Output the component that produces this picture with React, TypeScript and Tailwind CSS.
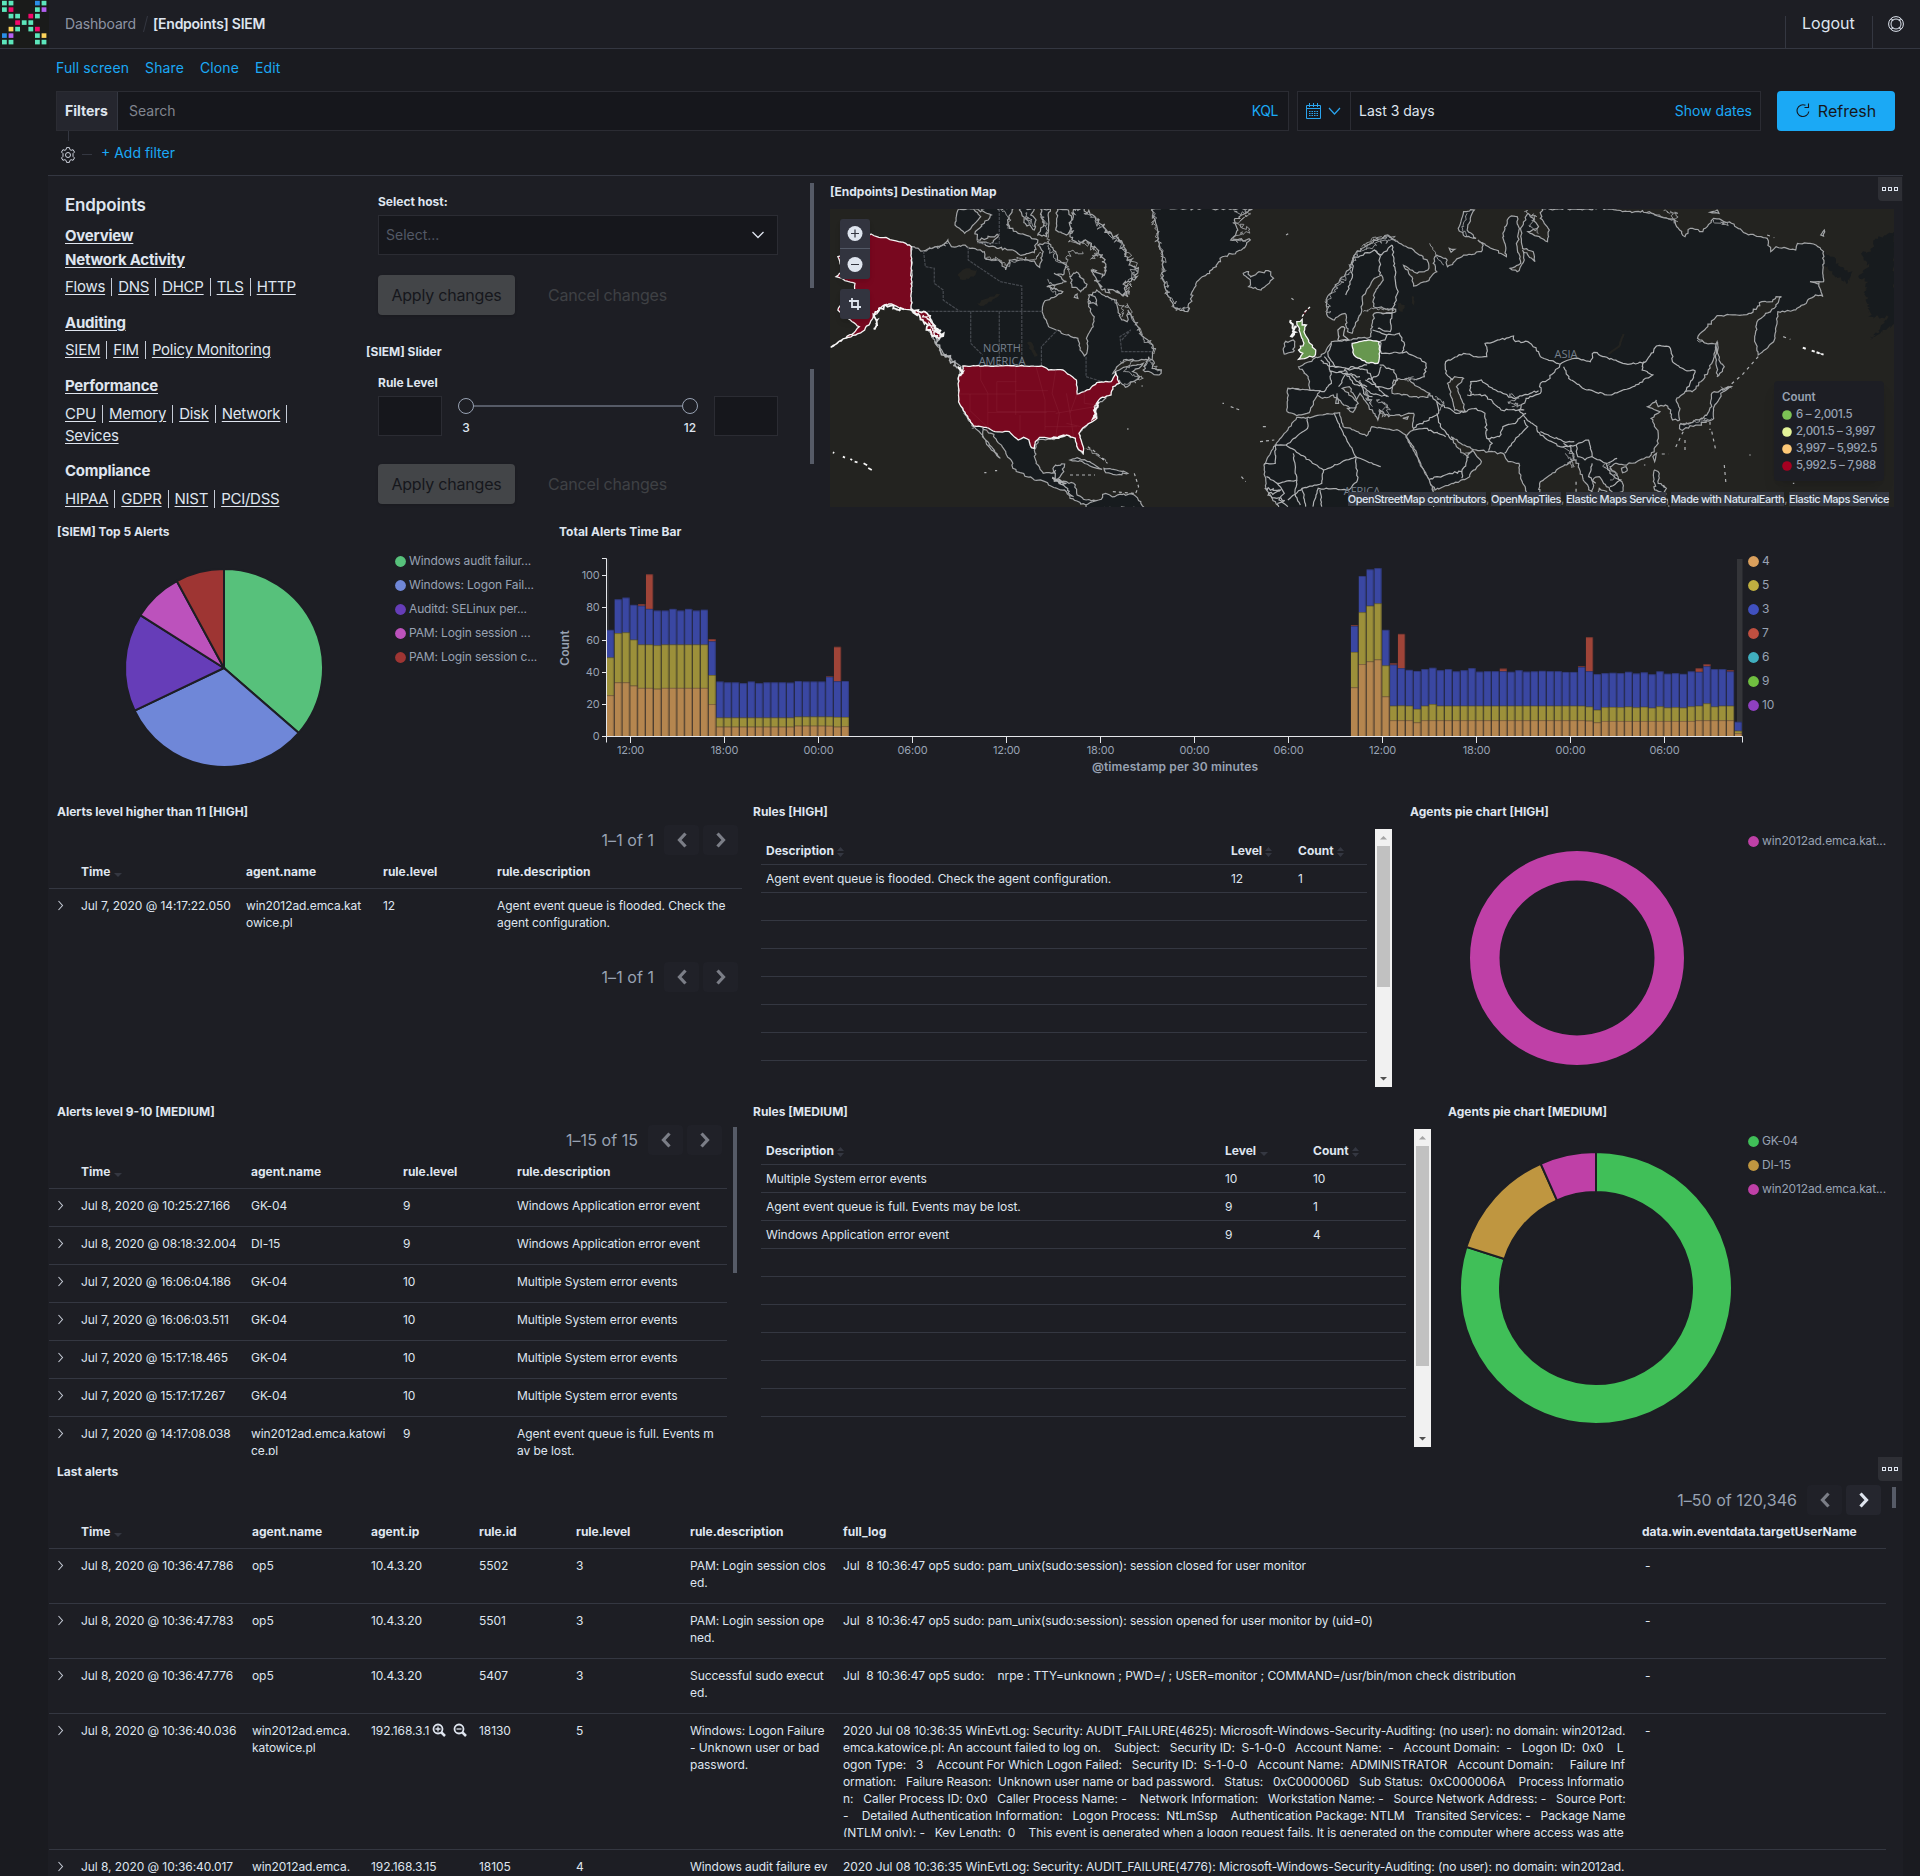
import React from "react";

/* ---------- shared bits ---------- */

function Title({ children, className = "" }: { children: React.ReactNode; className?: string }) {
  return (
    <h2 className={"h-8 shrink-0 pl-[9px] text-xs leading-8 font-bold whitespace-nowrap " + className}>{children}</h2>
  );
}

function Dots() {
  return (
    <button className="flex h-6 w-6 items-center justify-center gap-[2px] rounded-bl bg-[#2e2f35]">
      <i className="block h-1 w-1 border border-[#dfe5ef]" />
      <i className="block h-1 w-1 border border-[#dfe5ef]" />
      <i className="block h-1 w-1 border border-[#dfe5ef]" />
    </button>
  );
}

function Pager({ label, last = false }: { label: string; last?: boolean }) {
  return (
    <div className="flex h-[30px] shrink-0 items-center justify-end">
      <span className="mr-[10px] text-base leading-6 tracking-[0.003em] whitespace-nowrap text-[#98a2b3]">{label}</span>
      <span className="mr-1 flex h-[30px] w-[35px] items-center justify-center rounded bg-[#202128]">
        <svg width="12" height="16" viewBox="0 0 12 16" fill="none" stroke="#7b7e87" strokeWidth="3.200">
          <path d="M9.500 1.500 3.500 8l6 6.500" />
        </svg>
      </span>
      <span className={"flex h-[30px] w-[35px] items-center justify-center rounded " + (last ? "bg-[#25262e]" : "bg-[#202128]")}>
        <svg width="12" height="16" viewBox="0 0 12 16" fill="none" stroke={last ? "#dfe5ef" : "#7b7e87"} strokeWidth="3.200">
          <path d="m2.500 1.500 6 6.500-6 6.500" />
        </svg>
      </span>
    </div>
  );
}

function Expand() {
  return (
    <svg className="mt-[3px] ml-2" width="7" height="11" viewBox="0 0 7 11" fill="none" stroke="#c5cad4" strokeWidth="1.1">
      <path d="m1.500 1 4 4.500-4 4.500" />
    </svg>
  );
}

function SortDown() {
  return <i className="mt-1 ml-1 inline-block border-x-[4px] border-t-[4px] border-x-transparent border-t-[#343741] align-middle" />;
}

function SortBoth() {
  return (
    <svg className="ml-[3px] inline-block" width="7" height="10" viewBox="0 0 7 10" fill="#343741">
      <path d="M3.500 0 7 4H0zM3.500 10 0 6h7z" />
    </svg>
  );
}

function Legend({ items, className = "" }: { items: [string, string][]; className?: string }) {
  return (
    <ul className={"pt-px text-xs tracking-[-0.011em] text-[#98a2b3] " + className}>
      {items.map(([c, t]) => (
        <li key={t} className="flex h-6 items-center gap-[3px] whitespace-nowrap">
          <svg width="11" height="11" viewBox="0 0 11 11">
            <circle cx="5.500" cy="5.500" r="5.400" fill={c} />
          </svg>
          {t}
        </li>
      ))}
    </ul>
  );
}

function Donut({ size, inner, parts }: { size: number; inner: number; parts: [string, number, number][] }) {
  const c = size / 2;
  const pt = (r: number, a: number) => {
    const t = ((a - 90) * Math.PI) / 180;
    return (c + r * Math.cos(t)).toFixed(2) + " " + (c + r * Math.sin(t)).toFixed(2);
  };
  if (parts.length === 1) {
    return (
      <svg width={size} height={size}>
        <circle cx={c} cy={c} r={(c + inner) / 2} fill="none" stroke={parts[0][0]} strokeWidth={c - inner} />
      </svg>
    );
  }
  return (
    <svg width={size} height={size} className="overflow-visible">
      {parts.map(([color, a, b]) => {
        const big = b - a > 180 ? 1 : 0;
        const tail = inner ? `L${pt(inner, b)}A${inner} ${inner} 0 ${big} 0 ${pt(inner, a)}Z` : `L${c} ${c}Z`;
        return <path key={color} d={`M${pt(c, a)}A${c} ${c} 0 ${big} 1 ${pt(c, b)}${tail}`} fill={color} stroke="#1d1e24" strokeWidth="2" />;
      })}
    </svg>
  );
}

/* ---------- top bars ---------- */

const LOGO = ["gg...bg", "gr...gp", ".gg.rg.", "..rgg..", ".yg.gr.", "bp...gy", "gg...gg"];
const LOGO_COLORS: Record<string, string> = { g: "#5ce6bb", r: "#f5086b", b: "#2a8ee8", p: "#b460f2", y: "#fbd35a" };

function Header() {
  return (
    <header className="flex h-[49px] border-b border-[#343741] bg-[#1d1e24]">
      <svg width="49" height="48" className="shrink-0 bg-[#1a1b1a]">
        {LOGO.map((row, y) =>
          row.split("").map((k, x) => (k === "." ? null : <rect key={x + "-" + y} x={2 + x * 6.6} y={0.8 + y * 6.5} width="4.800" height="4.600" fill={LOGO_COLORS[k]} />))
        )}
      </svg>
      <nav className="ml-4 flex flex-1 items-center text-sm">
        <span className="tracking-[-0.01em] text-[#8d94a3]">Dashboard</span>
        <svg className="mr-1 ml-[6px]" width="7" height="18" stroke="#343741">
          <path d="M5.500 1 1.500 17" />
        </svg>
        <span className="font-semibold tracking-[-0.018em]">[Endpoints] SIEM</span>
      </nav>
      <a className="mt-4 w-[87px] border-l border-[#343741] pl-4 text-base leading-[15px]">Logout</a>
      <div className="mt-4 w-12 border-l border-[#343741] pl-[15px]">
        <svg width="16" height="16" viewBox="0 0 16 16" fill="none" stroke="#dfe5ef">
          <circle cx="8" cy="8" r="7.400" />
          <circle cx="8" cy="8" r="5" />
          <path d="m2.500 3.500 2.200 1M3.500 2.500l1.500 2M13.500 3.500l-2.200 1M12.500 2.500l-1.500 2M2.500 12.500l2.200-1M3.500 13.500l1.500-2M13.500 12.500l-2.200-1M12.500 13.500l-1.500-2" />
        </svg>
      </div>
    </header>
  );
}

function QueryBar() {
  return (
    <div className="h-[126px] pl-14">
      <nav className="flex h-[42px] gap-4 pt-[9px] text-sm tracking-[0.008em] text-[#1ba9f5]">
        <a>Full screen</a>
        <a>Share</a>
        <a>Clone</a>
        <a>Edit</a>
      </nav>
      <div className="flex h-10 text-sm">
        <div className="mr-2 flex w-[1233px] items-center border border-[#2b2c33] bg-[#16171c]">
          <b className="mr-[11px] flex h-full w-[61px] items-center border-r border-[#343741] bg-[#25262e] pl-2">Filters</b>
          <span className="flex-1 text-[#81858f]">Search</span>
          <a className="mr-[10px] tracking-[-0.03em] text-[#1ba9f5]">KQL</a>
        </div>
        <div className="mr-4 flex w-[464px] items-center border border-[#2b2c33] bg-[#16171c]">
          <span className="flex h-full w-[53px] items-center gap-[7px] border-r border-[#2b2c33] pl-2">
            <svg width="15" height="16" viewBox="0 0 15 16" fill="none" stroke="#2aa4ee">
              <path d="M.5 2.500h14v13H.5zM.5 5.500h14M3.500 0v4M7.500 0v4M11.500 0v4" />
              <path d="M3 8.500h9M3 10.500h9M3 12.500h9" strokeDasharray="1.500 1" />
            </svg>
            <svg width="13" height="8" viewBox="0 0 13 8" fill="none" stroke="#2aa4ee" strokeWidth="1.200">
              <path d="m1 1 5.500 6L12 1" />
            </svg>
          </span>
          <span className="flex-1 pl-2">Last 3 days</span>
          <a className="mr-2 text-[#1ba9f5]">Show dates</a>
        </div>
        <button className="flex w-[118px] items-center justify-center gap-2 rounded bg-[#1ba9f5] pb-px text-base text-[#16171c]">
          <svg width="14" height="15" viewBox="0 0 14 15" fill="none" stroke="#16171c" strokeWidth="1.100">
            <path d="M12.800 8.500A5.900 5.900 0 1 1 9.500 2.300M12.500.5v4h-4" />
          </svg>
          <span className="leading-none font-normal">Refresh</span>
        </button>
      </div>
      <div className="flex">
        <div className="flex w-6 flex-col items-center">
          <i className="h-[10px] w-px bg-[#343741]" />
          <svg className="mt-[6px]" width="16" height="16" viewBox="0 0 16 16" fill="none" stroke="#cdd2dc">
            <path d="M6.600.6h2.800l.5 2 1.200.7 2-.6 1.400 2.400-1.500 1.500v2.800l1.500 1.500-1.400 2.400-2-.6-1.200.7-.5 2H6.600l-.5-2-1.200-.7-2 .6-1.400-2.400L3 9.400V6.600L1.500 5.100l1.400-2.400 2 .6 1.200-.7z" />
            <circle cx="8" cy="8" r="2.500" />
          </svg>
        </div>
        <i className="mt-[23px] ml-[2px] h-px w-[10px] bg-[#343741]" />
        <a className="mt-3 ml-[9px] text-sm text-[#1ba9f5]">+ Add filter</a>
      </div>
    </div>
  );
}

/* ---------- first row ---------- */

function Links({ items, trailing = false }: { items: string[]; trailing?: boolean }) {
  return (
    <p className="flex h-[22px] items-center text-[15px] leading-[22px] tracking-[-0.017em] whitespace-nowrap">
      {items.map((t, i) => (
        <React.Fragment key={t}>
          <a className="underline underline-offset-[2px]">{t}</a>
          {(i < items.length - 1 || trailing) && <span className="mx-[6px] h-[18px] w-px shrink-0 bg-[#c6ccd7]" />}
        </React.Fragment>
      ))}
    </p>
  );
}

function EndpointLinks() {
  const head = "h-6 text-[15px] leading-6 font-bold tracking-[-0.015em] underline underline-offset-[2px]";
  return (
    <section className="w-[311px] shrink-0 pt-[17px] pl-[17px]">
      <h1 className="h-[31px] text-[17px] leading-[25px] font-semibold tracking-[-0.01em]">Endpoints</h1>
      <h3 className={head}>Overview</h3>
      <h3 className={head}>Network Activity</h3>
      <div className="h-[39px] pt-1">
        <Links items={["Flows", "DNS", "DHCP", "TLS", "HTTP"]} />
      </div>
      <h3 className={head}>Auditing</h3>
      <div className="h-[39px] pt-1">
        <Links items={["SIEM", "FIM", "Policy Monitoring"]} />
      </div>
      <h3 className={head}>Performance</h3>
      <div className="h-[61px] pt-[5px]">
        <Links items={["CPU", "Memory", "Disk", "Network"]} trailing />
        <Links items={["Sevices"]} />
      </div>
      <h3 className="h-6 text-[15px] leading-6 font-bold tracking-[-0.015em]">Compliance</h3>
      <div className="pt-[5px]">
        <Links items={["HIPAA", "GDPR", "NIST", "PCI/DSS"]} />
      </div>
    </section>
  );
}

function FormButtons() {
  return (
    <div className="flex h-10 items-center text-base tracking-[-0.012em]">
      <button className="h-10 w-[137px] rounded bg-[#434548] pb-px text-[#16171c] shadow">Apply changes</button>
      <span className="ml-[33px] pb-px text-[#3f4145]">Cancel changes</span>
    </div>
  );
}

function Controls() {
  return (
    <section className="w-[462px] shrink-0">
      <div className="flex h-40 justify-between pt-[7px] pl-[19px]">
        <div className="w-[400px] pt-[11px]">
          <label className="block h-[21px] text-xs font-bold">Select host:</label>
          <div className="mb-5 flex h-10 items-center justify-between border border-[#2b2c33] bg-[#16171c] pr-3 pl-[7px] text-sm text-[#535966]">
            Select...
            <svg width="14" height="8" viewBox="0 0 14 8" fill="none" stroke="#dfe5ef" strokeWidth="1.300">
              <path d="m1.500 1 5.500 5.500L12.500 1" />
            </svg>
          </div>
          <FormButtons />
        </div>
        <i className="mr-[7px] h-[105px] w-1 bg-[#565b67]" />
      </div>
      <Title className="!pl-[7px]">[SIEM] Slider</Title>
      <div className="flex justify-between pt-px pl-[19px]">
        <div className="w-[400px] pt-[6px]">
          <label className="block h-[21px] text-xs font-bold">Rule Level</label>
          <div className="mb-7 flex h-10 justify-between">
            <span className="h-10 w-16 border border-[#2b2c33] bg-[#16171c]" />
            <svg width="240" height="40" fill="none" stroke="#98a2b3">
              <path d="M16 10h208" stroke="#565b67" strokeWidth="2" />
              <circle cx="8" cy="10" r="7.500" />
              <circle cx="232" cy="10" r="7.500" />
              <g fill="#dfe5ef" stroke="none" fontSize="12" fontWeight="500" textAnchor="middle">
                <text x="8" y="36">3</text>
                <text x="232" y="36">12</text>
              </g>
            </svg>
            <span className="h-10 w-16 border border-[#2b2c33] bg-[#16171c]" />
          </div>
          <FormButtons />
        </div>
        <i className="mr-[7px] h-[95px] w-1 bg-[#565b67]" />
      </div>
    </section>
  );
}

/* Outlines are stored as point lists; rough() subdivides them into a ragged coastline. */
function rough(points: string, amp: number, close = true) {
  const p = points.trim().split(/\s+/).map((s) => s.split(",").map(Number));
  if (close) p.push(p[0]);
  let seed = 7 + p.length * 13 + Math.abs(p[0][0]);
  const rnd = () => {
    seed = (seed * 16807 + 11) % 2147483647;
    return (seed % 1000) / 500 - 1;
  };
  const step = amp > 4 ? 4.5 : 7;
  let d = `M${p[0][0]} ${p[0][1]}`;
  for (let i = 1; i < p.length; i++) {
    const [ax, ay] = p[i - 1];
    const [bx, by] = p[i];
    const len = Math.hypot(bx - ax, by - ay);
    const n = amp > 0 ? Math.max(1, Math.round(len / step)) : 1;
    for (let k = 1; k < n; k++) {
      const t = k / n;
      d += `L${(ax + (bx - ax) * t + rnd() * amp).toFixed(1)} ${(ay + (by - ay) * t + rnd() * amp).toFixed(1)}`;
    }
    d += `L${bx} ${by}`;
  }
  return close ? d + "Z" : d;
}

type Shape = [string, number];

const WEST_LAND: Shape[] = [
  ["256,200 290,213 310,205 335,200 358,180 368,200 400,195 440,210 460,215 465,238 500,240 520,270 530,240 560,240 600,243 615,262 625,215 610,195 640,190 660,215 665,240 690,255 680,285 655,280 690,305 635,320 680,335 655,352 630,362 622,395 640,440 690,465 722,475 728,510 740,528 748,515 748,470 765,440 768,410 752,380 755,345 775,330 800,350 830,360 835,390 845,420 860,425 862,390 868,400 890,440 905,470 932,495 930,540 850,540 820,580 850,562 905,550 875,575 895,590 855,622 838,600 838,610 820,620 800,655 770,680 775,715 735,745 725,760 735,800 735,820 722,805 715,775 690,765 660,775 610,780 605,800 600,810 605,850 625,880 650,880 660,855 685,852 678,880 660,900 690,905 715,915 720,945 745,960 780,965 745,975 700,955 690,935 640,915 630,905 600,900 540,865 540,850 510,800 480,760 455,745 455,770 505,835 480,810 450,760 415,720 400,690 388,665 388,590 395,560 370,545 330,500 300,440 290,400 256,390", 3],
  ["388,87 378,135 405,160 425,140 450,110 430,87", 2],
  ["435,87 480,105 460,130 435,155 440,180 500,165 480,190 440,185 500,205 540,210 560,225 600,218 610,180 555,160 530,145 525,120 540,87", 4],
  ["560,87 575,130 600,150 605,120 590,105 600,87", 4],
  ["618,87 625,140 610,165 635,170 640,120 645,87", 4],
  ["665,87 660,150 690,165 700,155 705,120 695,90", 3],
  ["710,87 705,130 700,170 720,190 750,185 780,210 800,260 790,290 760,270 790,330 840,340 862,350 855,305 880,300 888,265 860,240 850,200 830,170 800,150 770,110 740,87", 7],
  ["715,345 720,342 722,355 712,352", 2],
  ["700,290 720,275 745,320 730,335 705,315", 5],
  ["752,345 770,350 775,375 755,370", 4],
  ["928,87 940,130 945,180 960,230 960,300 975,350 990,380 1030,395 1045,330 1065,295 1110,260 1120,235 1180,210 1205,180 1150,180 1170,150 1160,120 1210,87", 4],
  ["1185,280 1200,275 1205,292 1225,278 1255,272 1270,295 1235,330 1200,320 1205,305", 4],
  ["905,570 920,530 935,545 930,565 955,570 950,585 910,575", 4],
  ["700,840 720,833 755,845 790,868 760,860 735,845", 2],
  ["795,865 830,870 862,880 830,885 800,878", 3],
  ["745,975 780,960 800,940 825,950 850,942 880,945 910,985 745,985", 4],
  ["1300,490 1325,480 1328,512 1300,522", 4],
  ["1310,625 1400,632 1385,660 1370,698 1335,707 1308,695", 2],
];

/* Fjords and skerries drawn along the indented coasts. */
const WEST_FRINGE: Shape[] = [
  ["932,95 945,180 960,230 962,300 978,350 1000,383 1030,392", 9],
  ["1160,95 1205,100 1160,130 1200,150 1155,180 1190,185", 8],
  ["740,100 800,150 850,200 882,265 862,300 865,345", 11],
  ["700,180 740,190 775,215 760,235 790,225", 9],
  ["700,290 690,250 700,215 735,215", 7],
  ["860,370 868,400 890,440 905,470 932,495 935,520", 9],
  ["290,213 310,205 335,203 358,190", 6],
  ["460,235 500,238 520,255 560,235 600,238 620,220", 7],
  ["620,95 635,150 640,200 660,240 690,250", 6],
  ["510,95 535,120 525,145", 7],
  ["575,100 590,130 575,110 605,140", 7],
  ["840,545 880,540 850,575 905,595 850,615", 5],
  ["1560,175 1515,215 1490,240 1480,280 1440,330 1420,360 1425,400", 8],
  ["905,560 925,540 935,560 955,575", 6],
  ["435,738 425,745", 3],
  ["815,360 850,375 845,410", 6],
  ["640,300 660,330 640,320 665,345", 6],
  ["745,805 770,820 800,845", 5],
];
const EAST_FRINGE: Shape[] = [
  ["5,200 30,185 60,170 100,180 60,190 20,205", 9],
  ["300,100 285,140 300,170", 5],
  ["420,640 445,655 415,665 450,675 425,680", 6],
  ["570,800 600,830 580,850 600,860 575,820", 6],
  ["45,660 75,680 55,700 70,710 85,690 60,665", 7],
  ["850,92 890,100 880,130 870,95", 6],
  ["800,97 850,112 890,125", 4],
  ["990,120 1030,135 1010,125", 6],
  ["945,480 965,490", 6],
  ["210,650 235,670 220,690", 6],
  ["900,735 960,720 985,715", 5],
  ["1010,620 1040,625", 5],
  ["10,395 40,385 95,392", 5],
  ["150,590 125,600 160,600", 5],
  ["15,630 30,665 15,640 35,680", 7],
  ["290,825 315,810", 5],
  ["195,190 215,230 235,255", 3],
  ["460,95 495,110 475,140 500,160", 7],
  ["700,850 680,860 720,880 700,900", 5],
];

const AFRICA = "1335,712 1360,715 1400,705 1455,698 1465,740 1495,750 1530,768 1545,740 1622,752 1640,765 1680,850 1715,920 1720,990 1290,990 1250,930 1243,855 1270,800 1310,750";

const EURASIA =
  "78,165 110,190 150,210 190,245 190,270 160,280 122,256 145,290 150,318 185,305 215,275 205,250 215,225 240,235 245,260 290,225 340,215 345,195 330,180 360,200 410,230 400,160 420,110 440,110 445,150 440,200 450,250 420,265 440,275 460,240 455,210 490,245 485,215 455,205 450,150 470,100 500,140 470,155 525,185 530,150 505,115 510,87 705,87 735,95 770,95 810,95 840,110 880,120 895,150 910,170 925,145 960,155 990,115 1040,130 1080,160 1140,175 1150,215 1165,200 1220,210 1225,190 1270,192 1298,215 1298,305 1260,305 1285,310 1296,350 1275,345 1220,390 1170,395 1165,440 1160,480 1115,525 1105,470 1115,420 1160,385 1180,350 1165,350 1155,365 1125,365 1095,400 1055,405 1000,407 945,475 970,490 1000,490 985,550 960,600 930,635 910,635 885,660 895,690 895,720 875,720 870,690 855,675 835,680 830,660 805,680 840,695 815,715 835,760 835,790 815,825 775,845 740,855 715,850 700,860 735,910 735,935 710,940 690,920 670,890 655,895 650,940 625,900 605,840 585,850 550,870 505,905 500,945 470,945 450,890 445,850 415,845 400,820 360,815 330,812 300,800 255,770 270,800 300,830 315,810 340,845 300,895 210,930 165,850 130,770 150,745 150,700 80,710 55,690 50,720 25,680 0,640 -10,660 -30,620 -50,625 -5,670 -20,695 -75,645 -105,655 -140,630 -145,590 -172,560 -140,545 -100,520 -80,485 -30,480 30,470 40,400 100,395 100,388 38,380 40,340 65,300 60,285 40,295 10,345 5,390 -15,440 -22,460 -35,455 -42,400 -72,420 -90,410 -95,360 -70,320 -32,270 -12,220 30,190";

const BORDERS = [
  "355,500 350,490 390,480 430,468 435,485 470,485 500,515 505,530 560,553 600,535 645,545 655,517 680,530 710,540 750,553 800,545 830,498 865,500 880,550 910,570 938,572 930,600 910,635",
  "355,500 355,530 325,530 290,520 240,545 240,580 260,600",
  "570,560 590,600 635,630 700,645 755,625 820,585 790,570 795,545",
  "560,553 525,600 505,610 505,640 465,655 445,690 465,715 495,740 505,765 560,800 605,795 640,780 650,830 690,850 720,835",
  "310,645 310,605 340,600 380,630 430,655 500,632",
  "300,645 350,645 395,690 460,690",
  "215,665 270,700 325,685 350,700 355,775 390,770 400,740 435,730 465,700",
  "355,775 370,790 360,812", "405,820 425,790 470,740 460,720",
  "150,745 220,700 215,665 195,640", "215,700 225,740 260,780", "150,750 180,745 240,770", "190,900 250,880 285,875 305,830", "285,875 285,895",
  "55,485 60,520 130,515 185,550 180,590 150,600", "35,450 50,455 75,465 70,480 45,490", "75,465 110,460 125,495 120,520", "60,400 90,400 85,455 50,445",
  "90,195 105,340 90,395", "40,210 55,225 55,285", "90,195 60,225 40,210 -20,235 -25,300 -40,345",
  "55,555 95,570 105,600 85,625 45,620 15,600", "-60,575 -20,560 20,570 45,620 75,650", "0,600 10,640 35,650", "-145,630 -100,635 -80,610 -85,555 -100,530", "-85,575 -40,580 -20,610 20,620", "-60,620 -40,580 0,590", "-80,490 -90,520 -70,560 -30,570 20,555", "-45,570 -5,605 30,640 80,650",
  "65,755 65,860", "65,845 160,845", "0,830 65,865 55,945", "600,840 590,800 570,790", "605,795 610,830 630,840 650,830", "650,850 640,890 660,910", "690,850 700,880 730,900 700,920",
  "505,755 570,785 600,785", "-110,540 -85,560 -60,560", "20,600 45,590 60,560",
];

const AFRICA_BORDERS = [
  "1365,715 1365,745 1305,795 1275,795 1275,850 1243,852", "1305,795 1410,870 1500,830 1455,740 1440,700", "1325,820 1335,900 1280,910 1250,890", "1410,870 1405,910 1350,925 1310,960", "1500,830 1505,900 1480,930 1395,925 1380,980", "1500,830 1570,860", "1310,625 1400,635", "1325,640 1320,690", "1280,910 1300,940 1285,960 1310,980", "1350,925 1360,980", "1400,930 1405,980", "1335,900 1330,940 1345,975",
];

const SEAS: Shape[] = [
  ["90,640 95,600 130,595 150,610 195,640 190,652 150,650", 3],
  ["245,610 265,590 290,595 270,620 285,660 295,695 265,690 255,650", 3],
  ["130,775 150,800 170,850 205,930 195,935 160,860", 2],
];

const ISLES: Shape[] = [
  ["320,90 300,150 325,175 295,170 275,145 290,95", 3],
  ["1000,485 1005,540 1020,560 1000,590 998,540", 3],
  ["985,640 1040,620 1010,640 990,690 985,720 900,750 895,735 960,715 985,680", 4],
  ["820,830 830,820 825,845", 2],
  ["825,870 838,880 835,910 858,925 850,940 825,930", 4],
  ["665,940 670,925 700,940 690,945", 3],
  ["732,865 745,860 748,872 735,878", 2],
  ["250,205 265,208 255,217", 2],
  ["120,715 135,710 132,718", 1],
  ["980,97 1000,90 1005,100", 2],
  ["1290,165 1300,150 1298,168", 2],
];

const DASHES = [
  "290,213 295,260 320,265 320,310 345,330 345,360 390,393", "256,394 622,394", "415,200 415,240 505,305 565,318 565,556", "422,394 422,490 455,525", "502,394 502,556", "620,556 620,500 665,450", "502,87 502,190 440,190", "845,480 870,450 840,470 845,515 930,515", "745,530 745,590 790,605",
];

const STATES = "M450 560v40l20 40v115M388 642h160M495 605v90h165M548 560v145M420 642v50l45 45M495 605h55M605 560l25 100v90M548 632h90M470 697h165M560 705v50M660 570l-10 70 20 60-10 70M720 640l-20 60 10 70M690 640l10 60M740 630v40l40 5M660 700l110-20M630 740h90M730 740l-40-10";

const US = "400,558 620,558 640,570 680,570 700,585 718,600 720,642 755,628 775,608 815,605 828,578 838,610 820,620 815,645 785,655 768,680 775,715 735,745 725,760 737,800 737,820 722,805 715,775 690,765 660,775 615,772 603,785 600,805 592,803 585,780 570,772 555,780 530,755 490,755 465,742 430,738 415,715 400,685 388,665 388,590 400,580";
const ALASKA = "143,162 165,172 190,175 240,190 256,200 256,390 225,385 200,372 175,378 150,410 125,450 100,465 60,480 30,502 95,458 110,440 85,420 50,390 60,370 95,340 98,310 45,290 65,275 50,230 100,200";
const PANHANDLE = "256,390 300,400 315,430 345,468 325,475 305,450 290,420";

function WorldMap() {
  const land = { fill: "#171b1e", stroke: "#a3a5a7", strokeWidth: 1.2, vectorEffect: "non-scaling-stroke" as const };
  const line = { fill: "none", stroke: "#b0b2b4", strokeWidth: 1.2, vectorEffect: "non-scaling-stroke" as const };
  const fringe = { fill: "none", stroke: "#9c9ea0", strokeWidth: 0.9, vectorEffect: "non-scaling-stroke" as const };
  const red = { fill: "#78081f", stroke: "#f5f5f5", strokeWidth: 1.3, vectorEffect: "non-scaling-stroke" as const };
  return (
    <svg width="1064" height="298" viewBox="0 0 1064 298" className="block bg-[#232320]">
      <g transform="translate(530 -29) scale(.35714 .33333)">
        <path d={rough("1495,155 1440,180 1430,215 1405,220 1425,260 1395,290 1420,305 1415,340 1430,410 1480,410 1450,460 1425,480 1500,430", 6)} fill="#171b1e" />
        <path d={rough("1298,215 1340,250 1375,275 1365,310 1335,290 1298,250", 6)} fill="#171b1e" />
        <path d={rough(EURASIA, 3)} {...land} />
        {ISLES.map(([p, a]) => <path key={p} d={rough(p, a)} {...land} />)}
        {SEAS.map(([p, a]) => <path key={p} d={rough(p, a)} {...land} fill="#232320" />)}
        {BORDERS.map((p) => <path key={p} d={rough(p, 3, false)} {...line} />)}
        {EAST_FRINGE.map(([p, a]) => <path key={p} d={rough(p, a, false)} {...fringe} />)}
        <path d={rough("738,462 725,500 695,522", 1, false)} fill="none" stroke="#232320" strokeWidth="6" />
        <path d={rough("105,370 125,375 120,395 108,390", 3)} fill="#232320" />
        <path d={rough("145,348 152,350 152,378 145,370", 2)} fill="#232320" />
        <path d="M1115 530l-45 55-45 40M1240 503l12 5M1265 512l33 12M1185 470l20 8M980 725v25M985 755l10 50M905 755l-25 55M910 780v40M1020 855l5 60M845 822h20M605 905v40M850 915l15 65M1140 165l20 8M795 855h4M1090 825h4M1212 910h4" {...line} strokeDasharray="3 4" />
        <path d="M1240 503l12 5M1265 512l33 12" {...line} stroke="#f5f5f5" strokeWidth={2} strokeDasharray="3 2" />
      </g>
      <g transform="translate(-10 -29) scale(.35714 .33333)">
        <path d={rough(AFRICA, 2)} {...land} />
        {AFRICA_BORDERS.map((p) => <path key={p} d={rough(p, 2, false)} {...line} />)}
        {WEST_LAND.map(([p, a]) => <path key={p} d={rough(p, a)} {...land} />)}
        {WEST_FRINGE.map(([p, a]) => <path key={p} d={rough(p, a, false)} {...fringe} />)}
        <path d={rough("385,285 410,265 440,270 430,290 400,300", 4)} fill="#232320" />
        <path d={rough("440,370 475,350 505,343 480,365 450,378", 4)} fill="#232320" />
        <path d={rough("580,490 590,485 610,525 600,530", 4)} fill="#232320" />
        {DASHES.map((p) => <path key={p} d={rough(p, 0, false)} {...line} stroke="#45494f" strokeDasharray="3 1" />)}
        <path d={rough(US, 1.5)} {...red} />
        <path d={STATES} fill="none" stroke="#8d2438" strokeWidth="2" opacity=".6" />
        <path d={rough(ALASKA, 2)} {...red} />
        <path d={rough(PANHANDLE, 5)} {...red} strokeWidth={1.8} />
        <path d={rough("290,405 320,440 335,468 305,430 325,470", 8, false)} {...red} fill="none" />
        <path d={rough("150,445 160,420 150,410 185,375 205,385 235,388", 6, false)} {...red} fill="none" strokeWidth={1.8} />
        <path d={rough("768,690 780,665 765,715 775,700", 4, false)} {...red} fill="none" strokeWidth={2} />
        <path d={rough("650,775 685,765", 4, false)} {...red} fill="none" strokeWidth={2} />
        <path d={rough("385,560 400,575 388,585", 5, false)} {...red} fill="none" strokeWidth={2} />
        <path d={rough("325,480 335,510 365,535 385,565", 7, false)} {...line} strokeWidth={1.6} />
        <path d="M36 817l4 2M64 830l6 3M85 837l5 3M97 845l8 2M122 850l10 6M135 864l10 6" {...red} strokeWidth={1.8} />
        <path d="M750 800l20 15 35 35M460 878h6M490 872h6M880 880l12 40-8 20M820 935l60 5M1127 670h4M1150 680l30 12M862 745v4M1240 740h12M1232 785l40-5M1180 890l12 15M1305 165l6-4M1320 355l6 4M900 618h4M700 885h70" {...line} strokeDasharray="3 3" />
        <path d={rough("1335,425 1350,418 1350,435 1362,435 1355,455 1368,485 1388,510 1385,528 1340,538 1352,520 1340,510 1355,490 1345,460", 3)} {...red} fill="#67974f" />
        <path d={rough("1318,420 1325,450 1322,470 1335,440", 5, false)} {...red} fill="none" strokeWidth={2} />
        <path d="M1350 410l8-15 14-14" {...red} strokeDasharray="3 2" />
        <path d={rough("1490,490 1535,480 1565,485 1568,515 1562,550 1530,548 1495,525", 2)} {...red} fill="#67974f" />
        <path d={rough("1450,450 1465,440 1470,470 1480,480 1450,480", 4)} {...line} />
        <path d={rough("1448,640 1452,670 1444,670", 2)} {...land} />
        <path d={rough("1475,685 1500,682 1492,697", 2)} {...land} />
        <path d={rough("1245,925 1290,930 1255,945 1300,960 1280,975", 5, false)} {...line} />
        <path d={rough("660,870 655,900 690,910 650,895 680,915 710,950", 5, false)} {...line} />
      </g>
      <g fill="#76808c" fontFamily="'Open Sans', sans-serif" fontSize="11" textAnchor="middle">
        <text x="172" y="143">NORTH</text>
        <text x="172" y="156">AMERICA</text>
        <text x="736" y="149">ASIA</text>
        <text x="532" y="286">AFRICA</text>
      </g>
    </svg>
  );
}

const MAP_LEGEND = [
  ["#7cc355", "6 – 2,001.5"],
  ["#e3f399", "2,001.5 – 3,997"],
  ["#fdc877", "3,997 – 5,992.5"],
  ["#a50021", "5,992.5 – 7,988"],
];
const CREDITS = ["OpenStreetMap contributors", "OpenMapTiles", "Elastic Maps Service", "Made with NaturalEarth", "Elastic Maps Service"];

function MapPanel() {
  return (
    <section className="w-[1082px]">
      <div className="flex h-[33px] justify-between pr-px">
        <Title>[Endpoints] Destination Map</Title>
        <div className="pt-px">
          <Dots />
        </div>
      </div>
      <div className="relative ml-[9px] w-[1064px] overflow-hidden">
        <WorldMap />
        <div className="absolute top-[10px] left-[10px] w-[30px]">
          <div className="rounded-[3px] bg-[#32343f] shadow-md">
            <svg width="30" height="60" stroke="#32343f">
              <circle cx="15" cy="14.500" r="7.500" fill="#dfe5ef" stroke="none" />
              <circle cx="15" cy="45.500" r="7.500" fill="#dfe5ef" stroke="none" />
              <path d="M11 14.500h8M15 10.500v8M11 45.500h8" strokeWidth="1.200" />
              <path d="M0 29.500h30" stroke="#535966" />
            </svg>
          </div>
          <div className="mt-[10px] flex h-[30px] items-center justify-center rounded-[3px] bg-[#32343f] shadow-md">
            <svg width="12" height="12" viewBox="0 0 12 12" fill="none" stroke="#dfe5ef" strokeWidth="1.800">
              <path d="M3 0v9h9M0 3h9v9" />
            </svg>
          </div>
        </div>
        <div className="absolute top-[172px] left-[944px] h-[100px] w-[110px] rounded bg-[#1d1e24] pt-2 pl-2 text-[11.5px] leading-[17px] font-medium text-[#98a2b3] shadow-lg">
          <b className="block font-semibold">Count</b>
          {MAP_LEGEND.map(([c, t]) => (
            <div key={t} className="flex items-center gap-1 tracking-[-0.025em] whitespace-nowrap">
              <svg width="10" height="10" viewBox="0 0 10 10">
                <circle cx="5" cy="5" r="4.800" fill={c} />
              </svg>
              {t}
            </div>
          ))}
        </div>
        <div className="absolute right-[5px] bottom-[2px] flex gap-[2px] text-[11px] leading-3 font-medium tracking-[-0.042em] whitespace-nowrap">
          {CREDITS.map((t, i) => (
            <span key={i}>
              <span className="bg-[#343741]">{t}</span>
              {i < 4 && <span className="text-[#7b7e87]">, </span>}
            </span>
          ))}
        </div>
      </div>
    </section>
  );
}

/* ---------- second row ---------- */

/* Cumulative tops per half-hour slot: level 4, level 5, level 3, level 7. */
const EARLY = [
  [25.5, 49, 66, 66], [33.5, 64, 85, 85], [33.5, 64.5, 86, 86], [31.5, 60, 81.5, 81.5], [30, 57, 81, 82], [30, 57, 79, 100.5], [29.5, 56.5, 78, 78],
  [30, 57, 78, 78], [30, 57, 79, 79], [30, 57, 78, 78], [30, 57, 79, 79], [30, 57, 78, 78], [30, 57, 78.5, 78.5], [20, 38, 59, 60.3],
  ...[34, 33.5, 33.5, 33, 34, 33, 33.5, 33.5, 33.5, 33.3, 34.3, 34, 34, 34].map((v, i) => [i > 9 ? 6.6 : 6, i > 9 ? 12.3 : 11.7, v, v]),
  [6.5, 12.3, 37, 37.4], [6, 12, 34.2, 55.5], [6.3, 12, 34.3, 34.3],
];
const LATE = [
  [30.4, 52.3, 68.4, 69], [44.8, 77, 99.4, 99.4], [46.5, 81, 103.5, 103.5], [47.7, 82.5, 104.3, 104.3], [24.8, 44, 66, 66], [10, 19, 44.5, 45.3], [10, 19.2, 42.3, 63.5],
  ...[41.2, 40.5, 41.7, 42.5, 41, 41.7, 40.3, 41, 42.3, 40.1, 40.4, 40.4].map((v, i) => [i === 1 ? 8.7 : 10, i === 1 ? 17 : i === 3 ? 20 : 19, v, v]),
  [10, 19, 40.4, 42],
  ...[40, 41, 40.1, 40.3, 40.6, 40.4, 40.4, 39.9, 39.9].map((v) => [10, 19, v, v]),
  [10, 19, 43, 43.5], [9.7, 18.5, 40.4, 61.5],
  ...[38.6, 39.2, 39.4, 39.2, 40, 39, 39.7, 38.5, 40.3, 38.8, 39.2, 38.7, 40.3].map((v, i) => [i === 0 ? 8.7 : 9.5, i === 0 ? 16.5 : v / 2 - 1.5, v, v]),
  [10, 19, 40, 42.2], [10, 20.5, 43.5, 44.7], [10, 18.5, 41.7, 41.7], [10, 19, 41.7, 41.7], [10, 19, 40.3, 41], [2, 3.5, 9, 9],
];
const STACK = ["#b5864f", "#9c903a", "#3a47a2", "#9f4438"];

function Bars() {
  const base = 188.3;
  const unit = 1.613;
  const pitch = 7.833;
  const slots = [...EARLY.map((v, i) => ({ v, i })), ...LATE.map((v, i) => ({ v, i: i + 95 }))];
  return (
    <svg width="1196" height="230" viewBox="0 0 1196 230" fontSize="11">
      <rect x="1183" y="11" width="5.500" height="177" fill="#343539" />
      <rect x="53" y="11" width="2" height="177" fill="#2a2b30" />
      {slots.map(({ v, i }) =>
        v.map((top, k) => {
          const low = k ? v[k - 1] : 0;
          if (top <= low) return null;
          const x = 52.8 + i * pitch;
          const y = base - top * unit;
          return (
            <g key={i + "-" + k}>
              <rect x={x} y={y} width="7.200" height={(top - low) * unit} fill={STACK[k]} />
              <path d={`M${x} ${y + 0.5}h7.2M${x + 6.6} ${y}v${(top - low) * unit}`} stroke="#1d1e24" strokeOpacity=".3" />
            </g>
          );
        })
      )}
      <path d="M48 10.500h4.500v184M52.500 188.500h1136v6" fill="none" stroke="#e4e6ea" />
      <g fill="#98a2b3" letterSpacing="-0.2">
        {[0, 20, 40, 60, 80, 100].map((n) => (
          <g key={n}>
            <path d={`M48 ${Math.round(base - n * unit) + 0.5}h5`} stroke="#e4e6ea" />
            <text x="45.500" y={base - n * unit + 4} textAnchor="end">{n}</text>
          </g>
        ))}
        {["12:00", "18:00", "00:00", "06:00", "12:00", "18:00", "00:00", "06:00", "12:00", "18:00", "00:00", "06:00"].map((t, i) => (
          <g key={i}>
            <path d={`M${Math.floor(76.3 + i * 94) + 0.5} 189v6`} stroke="#e4e6ea" />
            <text x={76.5 + i * 94} y="206" textAnchor="middle">{t}</text>
          </g>
        ))}
      </g>
      <g fill="#98a2b3" fontSize="12" fontWeight="600" textAnchor="middle" letterSpacing="0.1">
        <text x="621" y="223">@timestamp per 30 minutes</text>
        <text transform="translate(15 100) rotate(-90)">Count</text>
      </g>
    </svg>
  );
}

function ChartsRow() {
  return (
    <div className="flex h-[280px]">
      <section className="w-[502px]">
        <Title>[SIEM] Top 5 Alerts</Title>
        <div className="flex">
          <div className="mt-[21px] ml-[77px] h-[198px] w-[198px]">
            <Donut
              size={198}
              inner={0}
              parts={[["#57c17b", 0, 131], ["#6f87d8", 131, 244.5], ["#663db8", 244.5, 302.3], ["#bc52bc", 302.3, 331.5], ["#9e3533", 331.5, 360]]}
            />
          </div>
          <Legend
            className="ml-[72px]"
            items={[["#57c17b", "Windows audit failur..."], ["#6f87d8", "Windows: Logon Fail..."], ["#663db8", "Auditd: SELinux per..."], ["#bc52bc", "PAM: Login session ..."], ["#9e3533", "PAM: Login session c..."]]}
          />
        </div>
      </section>
      <section>
        <Title>Total Alerts Time Bar</Title>
        <div className="flex pl-1">
          <Bars />
          <Legend
            className="-ml-[2px]"
            items={[["#daa05d", "4"], ["#bfaf40", "5"], ["#4050bf", "3"], ["#bf4f40", "7"], ["#40afbf", "6"], ["#70bf40", "9"], ["#8f40bf", "10"]]}
          />
        </div>
      </section>
    </div>
  );
}

/* ---------- tables ---------- */

function AlertTable({ cols, heads, rows, rowClass, className = "" }: { cols: string; heads: string[]; rows: string[][]; rowClass: string; className?: string }) {
  return (
    <div className={"text-xs leading-[17px] tracking-[-0.006em] " + className}>
      <div className={"grid h-[34px] border-b border-[#343741] pt-2 font-bold tracking-normal " + cols}>
        <span />
        {heads.map((h, i) => (
          <span key={h} className="whitespace-nowrap">
            {h}
            {i === 0 && <SortDown />}
          </span>
        ))}
      </div>
      {rows.map((r, i) => (
        <div key={i} className={"grid border-b pt-2 " + cols + " " + rowClass}>
          <Expand />
          {r.map((c, k) => (
            <span key={k} className="whitespace-pre">{c}</span>
          ))}
        </div>
      ))}
    </div>
  );
}

function RulesTable({ cols, rows, count, levelDown = false }: { cols: string; rows: string[][]; count: number; levelDown?: boolean }) {
  const all = Array.from({ length: count }, (_, i) => rows[i] || ["", "", ""]);
  return (
    <div className="flex-1 text-xs leading-7 tracking-[-0.005em]">
      <div className={"grid h-7 border-b border-[#343741] font-bold tracking-normal " + cols}>
        <span>Description<SortBoth /></span>
        <span>Level{levelDown ? <SortDown /> : <SortBoth />}</span>
        <span>Count<SortBoth /></span>
      </div>
      {all.map((r, i) => (
        <div key={i} className={"grid h-7 border-b border-[#343741] " + cols}>
          {r.map((c, k) => (
            <span key={k}>{c}</span>
          ))}
        </div>
      ))}
    </div>
  );
}

function Scrollbar({ className, thumb }: { className: string; thumb: string }) {
  return (
    <div className={"flex w-[17px] shrink-0 flex-col items-center bg-[#f1f1f1] " + className}>
      <svg width="17" height="17" className="shrink-0"><path d="M5 10.500h7L8.500 7z" fill="#a3a3a3" /></svg>
      <i className={"w-[13px] bg-[#c1c1c1] " + thumb} />
      <svg width="17" height="17" className="mt-auto shrink-0"><path d="M5 7h7l-3.500 3.500z" fill="#505050" /></svg>
    </div>
  );
}

function HighRow() {
  return (
    <div className="flex h-[300px]">
      <section className="w-[696px]">
        <Title>Alerts level higher than 11 [HIGH]</Title>
        <div className="w-[694px]">
          <div className="-mt-[3px] pr-1">
            <Pager label="1–1 of 1" />
          </div>
          <AlertTable
            className="ml-px"
            cols="grid-cols-[32px_165px_137px_114px_1fr]"
            heads={["Time", "agent.name", "rule.level", "rule.description"]}
            rowClass="h-[72px] border-transparent"
            rows={[["Jul 7, 2020 @ 14:17:22.050", "win2012ad.emca.kat\nowice.pl", "12", "Agent event queue is flooded. Check the\nagent configuration."]]}
          />
          <div className="pt-px pr-1">
            <Pager label="1–1 of 1" />
          </div>
        </div>
      </section>
      <section className="w-[657px]">
        <Title>Rules [HIGH]</Title>
        <div className="flex pt-px pl-[17px]">
          <div className="mr-2 flex w-[606px] pt-2">
            <RulesTable cols="grid-cols-[465px_67px_1fr] pl-[5px]" count={7} rows={[["Agent event queue is flooded. Check the agent configuration.", "12", "1"]]} />
          </div>
          <Scrollbar className="h-[258px]" thumb="h-[141px]" />
        </div>
      </section>
      <section className="flex-1">
        <Title>Agents pie chart [HIGH]</Title>
        <div className="flex">
          <div className="mt-[23px] ml-[69px]">
            <Donut size={214} inner={77.5} parts={[["#bf40a7", 0, 360]]} />
          </div>
          <Legend className="ml-[64px]" items={[["#bf40a7", "win2012ad.emca.kat..."]]} />
        </div>
      </section>
    </div>
  );
}

const MEDIUM = [
  ["Jul 8, 2020 @ 10:25:27.166", "GK-04", "9", "Windows Application error event"],
  ["Jul 8, 2020 @ 08:18:32.004", "DI-15", "9", "Windows Application error event"],
  ["Jul 7, 2020 @ 16:06:04.186", "GK-04", "10", "Multiple System error events"],
  ["Jul 7, 2020 @ 16:06:03.511", "GK-04", "10", "Multiple System error events"],
  ["Jul 7, 2020 @ 15:17:18.465", "GK-04", "10", "Multiple System error events"],
  ["Jul 7, 2020 @ 15:17:17.267", "GK-04", "10", "Multiple System error events"],
  ["Jul 7, 2020 @ 14:17:08.038", "win2012ad.emca.katowi\nce.pl", "9", "Agent event queue is full. Events m\nay be lost."],
];

function MediumRow() {
  return (
    <div className="flex h-[360px]">
      <section className="w-[696px]">
        <Title>Alerts level 9-10 [MEDIUM]</Title>
        <div className="-mt-[3px] flex h-[330px] overflow-hidden">
          <div className="w-[679px] shrink-0">
            <div className="pr-[5px]">
              <Pager label="1–15 of 15" />
            </div>
            <AlertTable
              className="ml-px"
              cols="grid-cols-[32px_170px_152px_114px_1fr]"
              heads={["Time", "agent.name", "rule.level", "rule.description"]}
              rowClass="h-[38px] border-[#343741] last:h-[55px]"
              rows={MEDIUM}
            />
          </div>
          <i className="mt-[2px] ml-[6px] h-[146px] w-1 bg-[#565b67]" />
        </div>
      </section>
      <section className="w-[695px]">
        <Title>Rules [MEDIUM]</Title>
        <div className="flex pt-px pl-[17px]">
          <div className="mr-2 flex w-[645px] pt-2">
            <RulesTable
              cols="grid-cols-[459px_88px_1fr] pl-[5px]"
              count={9}
              levelDown
              rows={[["Multiple System error events", "10", "10"], ["Agent event queue is full. Events may be lost.", "9", "1"], ["Windows Application error event", "9", "4"]]}
            />
          </div>
          <Scrollbar className="h-[318px]" thumb="h-[220px]" />
        </div>
      </section>
      <section className="flex-1">
        <Title>Agents pie chart [MEDIUM]</Title>
        <div className="flex">
          <div className="mt-6 ml-[21px]">
            <Donut size={272} inner={96} parts={[["#40bf58", 0, 287.6], ["#bf9640", 287.6, 336], ["#bf40a7", 336, 360]]} />
          </div>
          <Legend className="ml-4" items={[["#40bf58", "GK-04"], ["#bf9640", "DI-15"], ["#bf40a7", "win2012ad.emca.kat..."]]} />
        </div>
      </section>
    </div>
  );
}

const LOG = [
  "2020 Jul 08 10:36:35 WinEvtLog: Security: AUDIT_FAILURE(4625): Microsoft-Windows-Security-Auditing: (no user): no domain: win2012ad.",
  "emca.katowice.pl: An account failed to log on.    Subject:   Security ID:  S-1-0-0   Account Name:  -   Account Domain:  -   Logon ID:  0x0    L",
  "ogon Type:   3    Account For Which Logon Failed:   Security ID:  S-1-0-0   Account Name:  ADMINISTRATOR   Account Domain:     Failure Inf",
  "ormation:   Failure Reason:  Unknown user name or bad password.   Status:   0xC000006D   Sub Status:  0xC000006A    Process Informatio",
  "n:   Caller Process ID: 0x0   Caller Process Name: -    Network Information:   Workstation Name: -   Source Network Address: -   Source Port:",
  "-    Detailed Authentication Information:   Logon Process:  NtLmSsp    Authentication Package: NTLM   Transited Services: -   Package Name",
  "(NTLM only): -   Key Length:  0    This event is generated when a logon request fails. It is generated on the computer where access was atte",
];

function LastAlerts() {
  const cols = "grid grid-cols-[32px_171px_119px_108px_97px_114px_153px_799px_1fr]";
  const rows = [
    ["Jul 8, 2020 @ 10:36:47.786", "op5", "10.4.3.20", "5502", "3", "PAM: Login session clos\ned.", "Jul  8 10:36:47 op5 sudo: pam_unix(sudo:session): session closed for user monitor"],
    ["Jul 8, 2020 @ 10:36:47.783", "op5", "10.4.3.20", "5501", "3", "PAM: Login session ope\nned.", "Jul  8 10:36:47 op5 sudo: pam_unix(sudo:session): session opened for user monitor by (uid=0)"],
    ["Jul 8, 2020 @ 10:36:47.776", "op5", "10.4.3.20", "5407", "3", "Successful sudo execut\ned.", "Jul  8 10:36:47 op5 sudo:    nrpe : TTY=unknown ; PWD=/ ; USER=monitor ; COMMAND=/usr/bin/mon check distribution"],
    ["Jul 8, 2020 @ 10:36:40.036", "win2012ad.emca.\nkatowice.pl", "192.168.3.1", "18130", "5", "Windows: Logon Failure\n- Unknown user or bad\npassword.", LOG.join("\n")],
    ["Jul 8, 2020 @ 10:36:40.017", "win2012ad.emca.", "192.168.3.15", "18105", "4", "Windows audit failure ev", "2020 Jul 08 10:36:35 WinEvtLog: Security: AUDIT_FAILURE(4776): Microsoft-Windows-Security-Auditing: (no user): no domain: win2012ad."],
  ];
  return (
    <section className="h-[420px] overflow-hidden">
      <div className="flex h-8 justify-between pr-px">
        <Title>Last alerts</Title>
        <div className="pt-px">
          <Dots />
        </div>
      </div>
      <div className="-mt-[3px] flex justify-end">
        <Pager label="1–50 of 120,346" last />
        <i className="mt-[2px] mr-[7px] ml-[11px] h-[21px] w-1 bg-[#565b67]" />
      </div>
      <div className="ml-px w-[1837px] text-xs leading-[17px] tracking-[-0.006em]">
        <div className={"h-[34px] border-b border-[#343741] pt-2 font-bold tracking-normal " + cols}>
          <span />
          <span>Time<SortDown /></span>
          {["agent.name", "agent.ip", "rule.id", "rule.level", "rule.description", "full_log", "data.win.eventdata.targetUserName"].map((h) => (
            <span key={h}>{h}</span>
          ))}
        </div>
        {rows.map((r, i) => (
          <div key={i} className={"overflow-hidden border-b border-[#343741] pt-2 " + (i === 3 ? "h-[136px] " : "h-[55px] ") + cols}>
            <Expand />
            {r.map((c, k) => (
              <span key={k} className={"h-[115px] overflow-hidden whitespace-pre " + (k === 2 ? "flex" : "")}>
                {c}
                {i === 3 && k === 2 && (
                  <svg className="mt-px ml-[3px]" width="35" height="14" viewBox="0 0 35 14" fill="none" stroke="#dfe5ef" strokeWidth="1.800">
                    <circle cx="6" cy="6" r="4.500" />
                    <path d="m9 9 4 4" strokeWidth="2.500" />
                    <path d="M3.500 6h5M6 3.500v5" strokeWidth="1.300" />
                    <circle cx="27" cy="6" r="4.500" />
                    <path d="m30 9 4 4" strokeWidth="2.500" />
                    <path d="M24.500 6h5" strokeWidth="1.300" />
                  </svg>
                )}
              </span>
            ))}
            <span className="pl-[3px]">{i < 4 ? "-" : ""}</span>
          </div>
        ))}
      </div>
    </section>
  );
}

export default function App() {
  return (
    <div className="h-[1876px] w-[1920px] overflow-hidden bg-[#1a1b20] font-[Inter,sans-serif] text-[#dfe5ef]">
      <Header />
      <QueryBar />
      <main className="ml-12 w-[1855px] border-t border-[#343741] bg-[#1d1e24]">
        <div className="flex h-[340px]">
          <EndpointLinks />
          <Controls />
          <MapPanel />
        </div>
        <ChartsRow />
        <HighRow />
        <MediumRow />
        <LastAlerts />
      </main>
    </div>
  );
}
